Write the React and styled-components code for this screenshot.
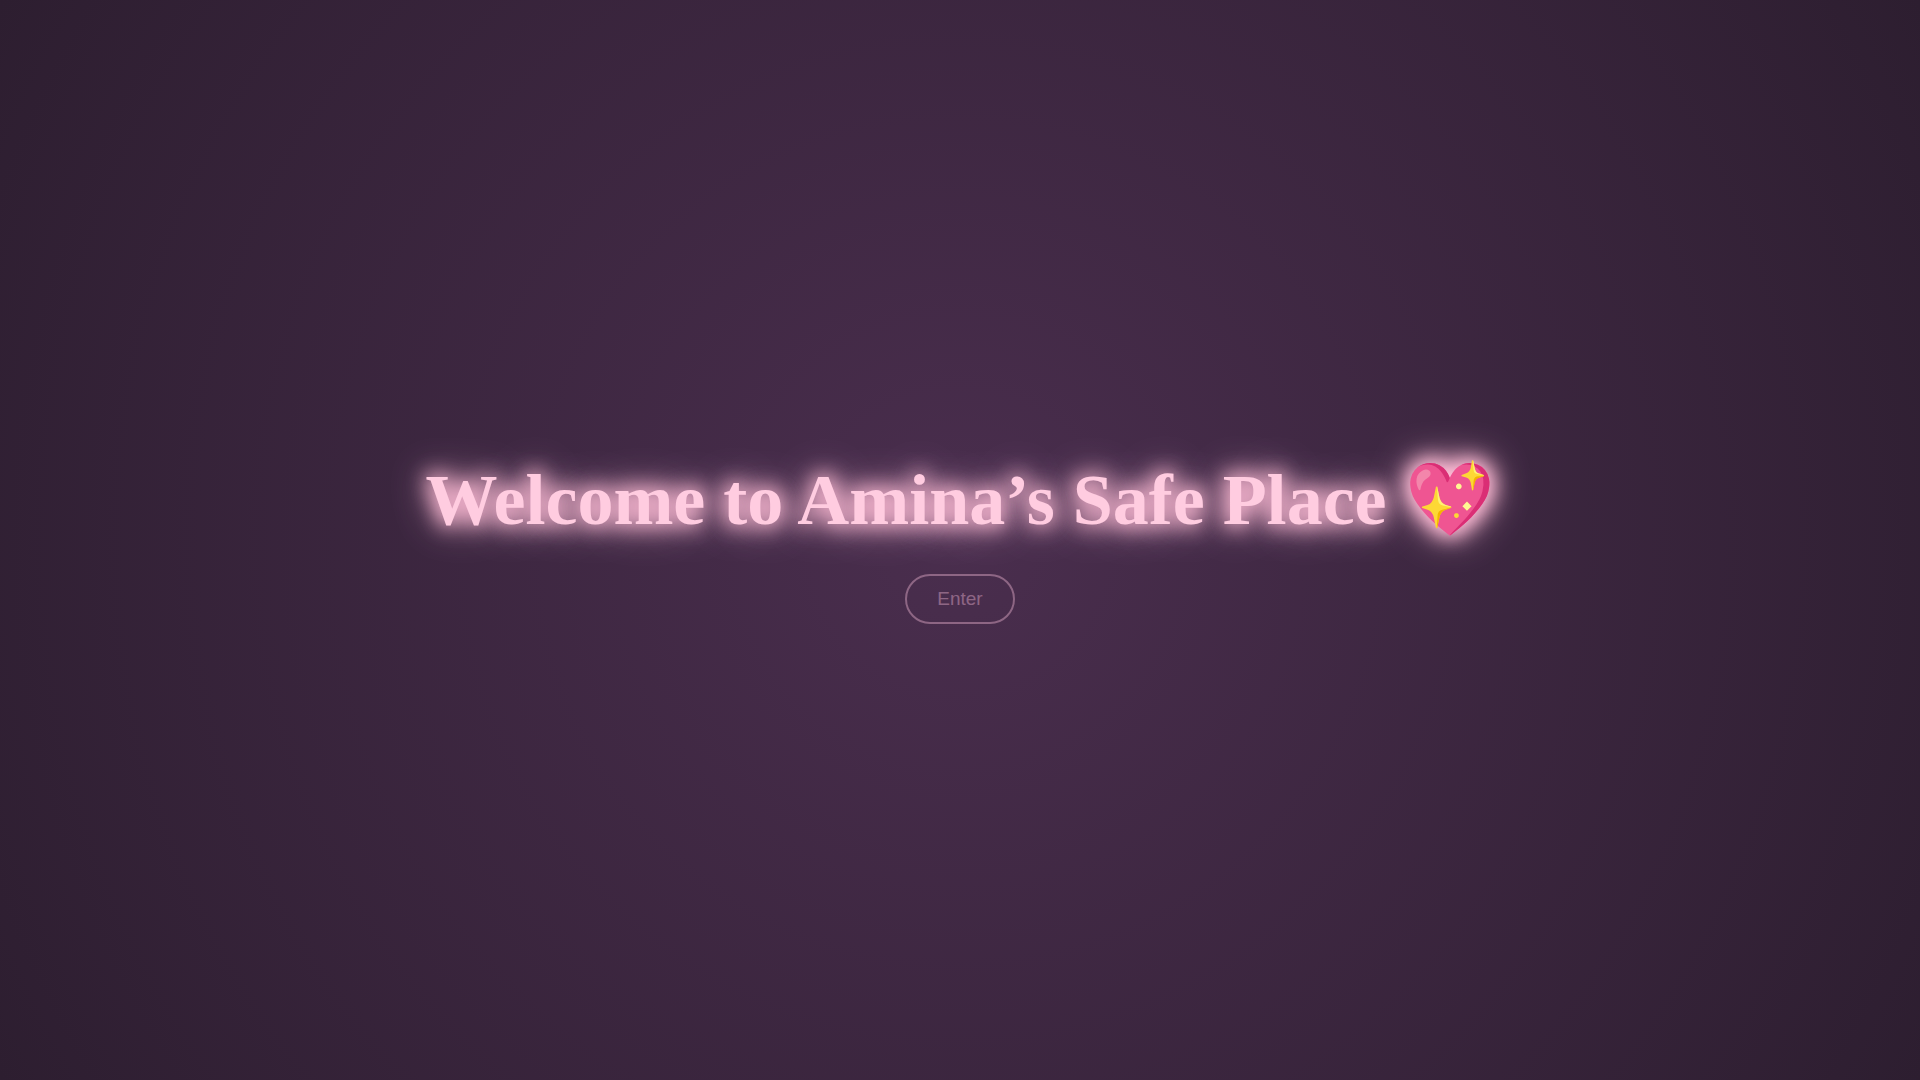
import styled, { createGlobalStyle } from 'styled-components'

const App = () => (
  <>
    <GlobalStyle />
    <Landing>
      <Title>Welcome to Amina’s Safe Place 💖</Title>
      <EnterButton type="button">Enter</EnterButton>
    </Landing>
  </>
)

const GlobalStyle = createGlobalStyle`
  body {
    margin: 0;
    overflow: hidden;
  }
`

const Landing = styled.main`
  display: flex;
  flex-direction: column;
  justify-content: center;
  align-items: center;
  height: 100vh;
  background: radial-gradient(circle at center, #4a2e4e, #2d1e30);
`

const Title = styled.h1`
  margin: 0;
  font-family: 'Liberation Serif', serif;
  font-size: 72px;
  font-weight: 700;
  text-align: center;
  color: #ffcce0;
  text-shadow: 0 0 20px #ffbcd6, 0 0 25px #ffbcd6, 0 0 40px #ffbcd6;
`

const EnterButton = styled.button`
  margin-top: 32px;
  padding: 12px 30px;
  border: 2px solid #ffc4e0;
  border-radius: 30px;
  font-family: 'Liberation Sans', sans-serif;
  font-size: 19px;
  color: #ffc4e0;
  background: transparent;
  opacity: 0.38;
  cursor: pointer;
`

export default App
